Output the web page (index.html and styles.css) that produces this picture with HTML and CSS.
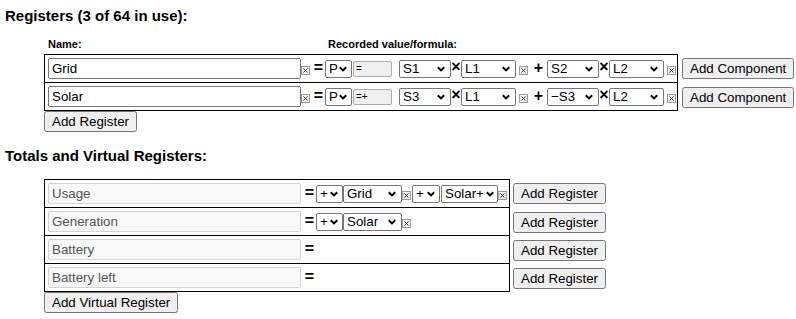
FILE: index.html
```html
<!DOCTYPE html>
<html>
<head>
<meta charset="utf-8">
<link rel="stylesheet" href="styles.css">
</head>
<body>
<h3 class="title first">Registers (3 of 64 in use):</h3>
<div class="head"><span class="h-name">Name:</span><span class="h-val">Recorded value/formula:</span></div>
<div class="tbl">
  <div class="line">
    <div class="cell c1">
      <input class="name" type="text" value="Grid">
      <span class="xb"><svg width="9" height="9" viewBox="0 0 9 9"><rect x=".5" y=".5" width="8" height="8" fill="#efefef" stroke="#9a9a9a"/><path d="M2.5 2.5l4 4M6.5 2.5l-4 4" stroke="#3a3a3a" stroke-width="1"/></svg></span>
      <span class="eq">=</span>
      <span class="sel s-p"><select><option>P</option></select><svg class="chev" width="8" height="6" viewBox="0 0 8 6"><path d="M.8 1.2L4 4.4l3.2-3.2" fill="none" stroke="#000" stroke-width="2"/></svg></span>
      <input class="fx" type="text" value="=" readonly>
      <span class="sel s-s first-s"><select><option>S1</option><option>−S3</option></select><svg class="chev" width="8" height="6" viewBox="0 0 8 6"><path d="M.8 1.2L4 4.4l3.2-3.2" fill="none" stroke="#000" stroke-width="2"/></svg></span>
      <span class="mul">×</span>
      <span class="sel s-l"><select><option>L1</option></select><svg class="chev" width="8" height="6" viewBox="0 0 8 6"><path d="M.8 1.2L4 4.4l3.2-3.2" fill="none" stroke="#000" stroke-width="2"/></svg></span>
      <span class="xb xg"><svg width="9" height="9" viewBox="0 0 9 9"><rect x=".5" y=".5" width="8" height="8" fill="#efefef" stroke="#9a9a9a"/><path d="M2.5 2.5l4 4M6.5 2.5l-4 4" stroke="#3a3a3a" stroke-width="1"/></svg></span>
      <span class="plus">+</span>
      <span class="sel s-s"><select><option>S2</option><option>−S3</option></select><svg class="chev" width="8" height="6" viewBox="0 0 8 6"><path d="M.8 1.2L4 4.4l3.2-3.2" fill="none" stroke="#000" stroke-width="2"/></svg></span>
      <span class="mul">×</span>
      <span class="sel s-l"><select><option>L2</option></select><svg class="chev" width="8" height="6" viewBox="0 0 8 6"><path d="M.8 1.2L4 4.4l3.2-3.2" fill="none" stroke="#000" stroke-width="2"/></svg></span>
      <span class="xb xg"><svg width="9" height="9" viewBox="0 0 9 9"><rect x=".5" y=".5" width="8" height="8" fill="#efefef" stroke="#9a9a9a"/><path d="M2.5 2.5l4 4M6.5 2.5l-4 4" stroke="#3a3a3a" stroke-width="1"/></svg></span>
    </div>
    <button class="btn b-comp">Add Component</button>
  </div>
  <div class="line">
    <div class="cell c1">
      <input class="name" type="text" value="Solar">
      <span class="xb"><svg width="9" height="9" viewBox="0 0 9 9"><rect x=".5" y=".5" width="8" height="8" fill="#efefef" stroke="#9a9a9a"/><path d="M2.5 2.5l4 4M6.5 2.5l-4 4" stroke="#3a3a3a" stroke-width="1"/></svg></span>
      <span class="eq">=</span>
      <span class="sel s-p"><select><option>P</option></select><svg class="chev" width="8" height="6" viewBox="0 0 8 6"><path d="M.8 1.2L4 4.4l3.2-3.2" fill="none" stroke="#000" stroke-width="2"/></svg></span>
      <input class="fx" type="text" value="=+" readonly>
      <span class="sel s-s first-s"><select><option>S3</option><option>−S3</option></select><svg class="chev" width="8" height="6" viewBox="0 0 8 6"><path d="M.8 1.2L4 4.4l3.2-3.2" fill="none" stroke="#000" stroke-width="2"/></svg></span>
      <span class="mul">×</span>
      <span class="sel s-l"><select><option>L1</option></select><svg class="chev" width="8" height="6" viewBox="0 0 8 6"><path d="M.8 1.2L4 4.4l3.2-3.2" fill="none" stroke="#000" stroke-width="2"/></svg></span>
      <span class="xb xg"><svg width="9" height="9" viewBox="0 0 9 9"><rect x=".5" y=".5" width="8" height="8" fill="#efefef" stroke="#9a9a9a"/><path d="M2.5 2.5l4 4M6.5 2.5l-4 4" stroke="#3a3a3a" stroke-width="1"/></svg></span>
      <span class="plus">+</span>
      <span class="sel s-s"><select><option>−S3</option><option>S2</option></select><svg class="chev" width="8" height="6" viewBox="0 0 8 6"><path d="M.8 1.2L4 4.4l3.2-3.2" fill="none" stroke="#000" stroke-width="2"/></svg></span>
      <span class="mul">×</span>
      <span class="sel s-l"><select><option>L2</option></select><svg class="chev" width="8" height="6" viewBox="0 0 8 6"><path d="M.8 1.2L4 4.4l3.2-3.2" fill="none" stroke="#000" stroke-width="2"/></svg></span>
      <span class="xb xg"><svg width="9" height="9" viewBox="0 0 9 9"><rect x=".5" y=".5" width="8" height="8" fill="#efefef" stroke="#9a9a9a"/><path d="M2.5 2.5l4 4M6.5 2.5l-4 4" stroke="#3a3a3a" stroke-width="1"/></svg></span>
    </div>
    <button class="btn b-comp">Add Component</button>
  </div>
</div>
<button class="btn b-under">Add Register</button>

<h3 class="title second">Totals and Virtual Registers:</h3>
<div class="tbl tbl2">
  <div class="line">
    <div class="cell c2">
      <input class="name" type="text" value="Usage" disabled>
      <span class="eq">=</span>
      <span class="sel s-op"><select><option>+</option></select><svg class="chev" width="8" height="6" viewBox="0 0 8 6"><path d="M.8 1.2L4 4.4l3.2-3.2" fill="none" stroke="#000" stroke-width="2"/></svg></span>
      <span class="sel s-reg"><select><option>Grid</option></select><svg class="chev" width="8" height="6" viewBox="0 0 8 6"><path d="M.8 1.2L4 4.4l3.2-3.2" fill="none" stroke="#000" stroke-width="2"/></svg></span>
      <span class="xb"><svg width="9" height="9" viewBox="0 0 9 9"><rect x=".5" y=".5" width="8" height="8" fill="#efefef" stroke="#9a9a9a"/><path d="M2.5 2.5l4 4M6.5 2.5l-4 4" stroke="#3a3a3a" stroke-width="1"/></svg></span>
      <span class="sel s-op s-op2"><select><option>+</option></select><svg class="chev" width="8" height="6" viewBox="0 0 8 6"><path d="M.8 1.2L4 4.4l3.2-3.2" fill="none" stroke="#000" stroke-width="2"/></svg></span>
      <span class="sel s-reg s-reg2"><select><option>Solar+</option></select><svg class="chev" width="8" height="6" viewBox="0 0 8 6"><path d="M.8 1.2L4 4.4l3.2-3.2" fill="none" stroke="#000" stroke-width="2"/></svg></span>
      <span class="xb"><svg width="9" height="9" viewBox="0 0 9 9"><rect x=".5" y=".5" width="8" height="8" fill="#efefef" stroke="#9a9a9a"/><path d="M2.5 2.5l4 4M6.5 2.5l-4 4" stroke="#3a3a3a" stroke-width="1"/></svg></span>
    </div>
    <button class="btn b-reg">Add Register</button>
  </div>
  <div class="line">
    <div class="cell c2">
      <input class="name" type="text" value="Generation" disabled>
      <span class="eq">=</span>
      <span class="sel s-op"><select><option>+</option></select><svg class="chev" width="8" height="6" viewBox="0 0 8 6"><path d="M.8 1.2L4 4.4l3.2-3.2" fill="none" stroke="#000" stroke-width="2"/></svg></span>
      <span class="sel s-reg"><select><option>Solar</option></select><svg class="chev" width="8" height="6" viewBox="0 0 8 6"><path d="M.8 1.2L4 4.4l3.2-3.2" fill="none" stroke="#000" stroke-width="2"/></svg></span>
      <span class="xb"><svg width="9" height="9" viewBox="0 0 9 9"><rect x=".5" y=".5" width="8" height="8" fill="#efefef" stroke="#9a9a9a"/><path d="M2.5 2.5l4 4M6.5 2.5l-4 4" stroke="#3a3a3a" stroke-width="1"/></svg></span>
    </div>
    <button class="btn b-reg">Add Register</button>
  </div>
  <div class="line">
    <div class="cell c2">
      <input class="name" type="text" value="Battery" disabled>
      <span class="eq">=</span>
    </div>
    <button class="btn b-reg">Add Register</button>
  </div>
  <div class="line">
    <div class="cell c2">
      <input class="name" type="text" value="Battery left" disabled>
      <span class="eq">=</span>
    </div>
    <button class="btn b-reg">Add Register</button>
  </div>
</div>
<button class="btn b-under">Add Virtual Register</button>
</body>
</html>
```

FILE: styles.css
```css
html, body {
  margin: 0;
  padding: 0;
  background: #fff;
}
body {
  font-family: "Liberation Sans", Arial, sans-serif;
  color: #000;
}
.title {
  font-size: 15px;
  line-height: 17px;
  font-weight: bold;
  margin: 0;
  padding-left: 5px;
}
.title.first { padding-top: 7px; }
.title.second { margin-top: 15px; }

.head {
  display: flex;
  margin-top: 14px;
  padding-left: 48px;
  height: 13px;
  line-height: 13px;
  font-size: 11px;
  font-weight: bold;
}
.h-name { width: 280px; }

.tbl {
  margin-top: 3px;
  margin-left: 44px;
}
.tbl2 { margin-top: 15px; }

.line {
  display: flex;
  align-items: center;
}
.cell {
  display: flex;
  align-items: center;
  height: 27px;
  border: 1px solid #000;
  padding-left: 3px;
  box-sizing: content-box;
}
.line + .line .cell { border-top: 0; }
.c1 { width: 629px; }
.c2 { width: 461px; }

input, select, button {
  font-family: "Liberation Sans", Arial, sans-serif;
  font-size: 13.333px;
  margin: 0;
}
.name {
  box-sizing: border-box;
  width: 253px;
  height: 21px;
  padding: 1px 2px;
}
.xb {
  display: block;
  flex: none;
  width: 9px;
  height: 9px;
  margin-top: 3px;
}
.xb svg { display: block; }
.xg { margin-left: 3px; }

.eq, .mul, .plus {
  display: block;
  flex: none;
  font-weight: bold;
  font-size: 16px;
  line-height: 16px;
  text-align: center;
  margin-bottom: 2px;
}
.eq { width: 13px; margin-left: 2px; }
.mul { width: 10px; margin-bottom: 4px; }
.plus { width: 17px; margin-left: 2px; }

.sel {
  display: flex;
  flex: none;
  align-items: center;
  box-sizing: border-box;
  height: 18px;
  border: 1px solid #767676;
  border-radius: 2px;
  background: #fff;
}
.sel select {
  -webkit-appearance: none;
  appearance: none;
  flex: 1 1 0;
  width: 0;
  min-width: 0;
  height: 16px;
  border: 0;
  background: transparent;
  padding: 0 0 0 3px;
  color: #000;
  outline: none;
}
.chev {
  display: block;
  flex: none;
  margin-right: 5px;
}
.s-p { width: 27px; }
.s-p .chev, .s-op .chev { margin-right: 4px; }
.fx {
  box-sizing: border-box;
  flex: none;
  width: 39px;
  height: 16px;
  margin-left: 1px;
  padding: 0 2px;
  font-size: 10px;
  background: #efefef;
  border: 1px solid #ababab;
  border-radius: 2px;
  color: #000;
  outline: none;
}
.s-s { width: 52px; }
.first-s { margin-left: 7px; }
.s-l { width: 55px; }

.s-op { width: 27px; }
.s-reg { width: 59px; }
.s-op2 { width: 28px; margin-left: 1px; }
.s-reg2 { width: 57px; margin-left: 1px; }
.s-reg2 .chev { margin-right: 3px; }

.btn {
  display: block;
  flex: none;
  height: 21px;
  padding: 1px 6px;
  white-space: nowrap;
}
.b-comp { margin-left: 4px; }
.b-reg { margin-left: 3px; }
.b-under { margin-left: 44px; }
```
